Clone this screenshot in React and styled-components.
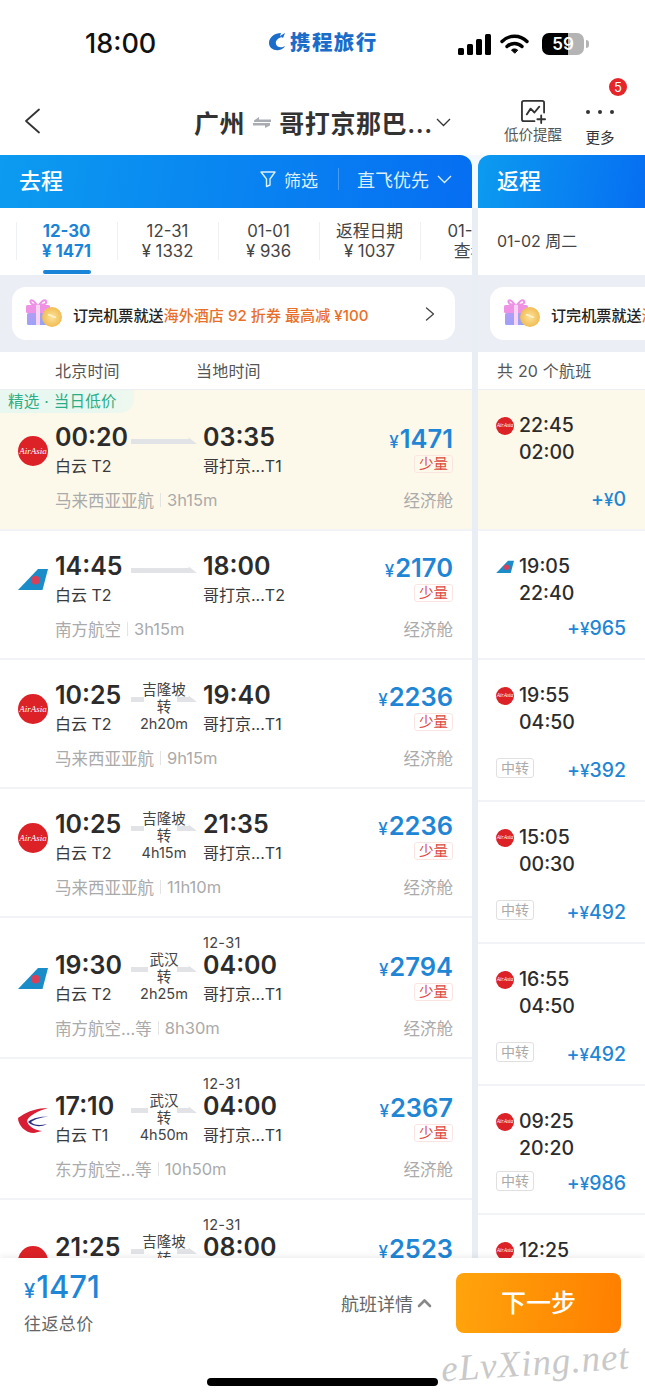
import React from 'react';
import styled, { createGlobalStyle } from 'styled-components';

const Global = createGlobalStyle`
  html, body { margin: 0; padding: 0; background: #fff; }
  body { font-family: Inter, "Noto Sans CJK SC", sans-serif; color: #333; }
  * { box-sizing: border-box; }
`;

const Page = styled.div`
  position: relative; width: 645px; height: 1398px; overflow: hidden;
  display: flex; flex-direction: column; background: #fff;
`;

/* Status bar */
const StatusBar = styled.div`
  height: 76px; flex: none; padding: 26px 55px 0 85px;
  display: flex; align-items: flex-start;
`;
const Clock = styled.div`font-size: 27px; line-height: 36px; font-weight: 500; color: #111; width: 183px;`;
const Brand = styled.div`
  display: flex; align-items: center; gap: 4px; width: 190px; height: 30px;
  color: #1c6dc9; font-size: 20.5px; font-weight: 800; letter-spacing: 1.4px;
`;
const StatusIcons = styled.div`display: flex; align-items: center; gap: 9px; height: 36px;`;
const Battery = styled.div`
  width: 42px; height: 22px; border-radius: 7px;
  background: linear-gradient(90deg, #000 62%, #b4b4b4 62%);
  color: #fff; font-size: 17px; font-weight: 600; line-height: 22px; text-align: center; position: relative;
  margin-left: 4px;
  &::after { content: ''; position: absolute; right: -5px; top: 7px; width: 3px; height: 8px; border-radius: 0 3px 3px 0; background: #b4b4b4; }
`;

/* Nav */
const Nav = styled.div`
  height: 79px; flex: none; position: relative; display: flex; align-items: flex-start;
`;
const Back = styled.div`width: 194px; padding: 32px 0 0 24px; flex: none;`;
const Title = styled.div`
  display: flex; align-items: center; height: 46px; margin-top: 23px;
  font-size: 25px; font-weight: 600; color: #333; letter-spacing: .6px; width: 309px; flex: none;
`;
const NavAction = styled.div`
  flex: none; width: ${p => p.$w}px; display: flex; flex-direction: column; align-items: center;
  padding-top: ${p => p.$top}px; color: ${p => p.$c}; font-size: 14.5px; line-height: 20px; white-space: nowrap;
`;
const Badge = styled.div`
  position: absolute; left: 609px; top: 2px; width: 18px; height: 18px; border-radius: 50%;
  background: #e5252a; color: #fff; font-size: 13px; line-height: 18px; text-align: center;
`;

/* Panels */
const Panels = styled.div`
  flex: 1; min-height: 0; display: flex; gap: 6px; overflow: hidden;
  background: linear-gradient(#f4f9ff 53px, #e9eef5 53px);
`;
const Panel = styled.div`
  display: flex; flex-direction: column; min-width: 0; overflow: hidden;
  width: ${p => p.$w}px; flex: none;
`;
const PanelHead = styled.div`
  height: 53px; flex: none; display: flex; align-items: center; color: #fff;
  padding: 0 20px 5px 19px;
  border-radius: ${p => (p.$side === 'left' ? '0 12px 0 0' : '12px 0 0 0')};
  background: linear-gradient(100deg, #0c9bf0, #066ef2);
`;
const PanelName = styled.div`font-size: 22px; font-weight: 500; flex: 1;`;
const HeadAction = styled.div`
  display: flex; align-items: center; gap: 8px; font-size: ${p => p.$fs}px; color: #dcefff;
`;
const HeadRule = styled.div`width: 1px; height: 22px; background: rgba(255,255,255,.25); margin: 0 18px 0 20px;`;

const Tabs = styled.div`
  height: 67px; flex: none; background: #fff; display: flex; padding-left: 16px; overflow: hidden;
`;
const Tab = styled.div`
  position: relative; flex: none; width: 101px; height: 67px; padding-top: 13px; text-align: center;
  font-size: 16.8px; line-height: 20px; color: ${p => (p.$active ? '#1a84d8' : '#444')};
  font-weight: ${p => (p.$active ? 700 : 400)};
  white-space: nowrap;
  &::before { content: ''; position: absolute; left: 0; top: 14px; height: 38px; width: 1px; background: #eef0f3; }
`;
const TabBar = styled.div`
  position: absolute; left: 27px; bottom: 1px; width: 48px; height: 4px; border-radius: 2px; background: #1a84d8;
`;
const ReturnDate = styled.div`
  height: 67px; flex: none; background: #fff; padding-left: 19px; font-size: 16px; line-height: 66px; color: #444;
`;

const PromoBand = styled.div`
  height: 77px; flex: none; background: #ebeff5; padding: 12px ${p => p.$right}px 12px ${p => p.$left}px;
`;
const PromoCard = styled.div`
  height: 53px; background: #fff; display: flex; align-items: center; padding-left: 13px;
  border-radius: ${p => (p.$open ? '14px 0 0 14px' : '14px')}; overflow: hidden; white-space: nowrap;
`;
const GiftBox = styled.div`flex: none; display: flex;`;
const PromoText = styled.div`
  margin-left: 10px; font-size: 15.1px; font-weight: 500; color: #222; flex: 1 0 auto;
  span { color: #e8702a; }
`;
const PromoArrow = styled.div`padding-right: 20px; display: flex;`;

const ColHead = styled.div`
  height: 38px; flex: none; background: #fff; border-bottom: 1px solid #eceef1;
  display: flex; align-items: center; padding: 0 0 2px ${p => p.$left}px;
  font-size: 16px; color: #555; letter-spacing: .2px; white-space: nowrap;
`;
const ColLabel = styled.div`width: 141px;`;

const List = styled.div`flex: 1; min-height: 0; overflow: hidden; background: #fff;`;

/* Outbound flight row */
const Row = styled.div`
  position: relative; height: ${p => (p.$tall ? 141 : 129)}px;
  padding: ${p => (p.$dated ? 17 : p.$tall ? 33 : 21)}px 19px 0 18px;
  background: ${p => (p.$hl ? '#fdf9ea' : '#fff')};
  border-bottom: 2px solid #f1f3f6;
`;
const PickTag = styled.div`
  position: absolute; left: 0; top: 0; height: 23px; width: 134px; padding-left: 8px;
  font-size: 15.5px; line-height: 23px; color: #2bae85; letter-spacing: .3px; white-space: nowrap;
  background: linear-gradient(90deg, #e9f7f1 70%, #eef8ee);
  border-radius: 0 0 14px 0;
`;
const Main = styled.div`
  display: grid; grid-template-columns: 37px 76px 72px 1fr auto; grid-template-rows: auto 30px 25px;
`;
const DateMark = styled.div`
  grid-column: 4; grid-row: 1; height: 16px; line-height: 16px; font-size: 14.5px; color: #444; letter-spacing: .3px;
`;
const LogoCell = styled.div`grid-column: 1; grid-row: 2 / 4; display: flex; align-items: center;`;
const Time = styled.div`
  grid-column: ${p => p.$col}; grid-row: 2; align-self: start; font-size: 25px; line-height: 28px; font-weight: 600; color: #2c2c2c; white-space: nowrap;
`;
const Terminal = styled.div`
  grid-column: ${p => p.$col}; grid-row: 3; align-self: end; margin-bottom: 1px; font-size: 16px; line-height: 22px; color: #3a3a3a; white-space: nowrap;
`;
const Mid = styled.div`grid-column: 3; grid-row: 2 / 4; position: relative; width: 66px;`;
const LineArt = styled.svg`position: absolute; left: 0; top: 13px;`;
const Transit = styled.div`
  position: relative; text-align: center; font-size: 14.5px; line-height: 17px; color: #444; white-space: nowrap;
`;
const PriceCell = styled.div`
  grid-column: 5; grid-row: 2 / 4; display: flex; flex-direction: column; align-items: flex-end;
`;
const Price = styled.div`
  padding-top: 1px; font-size: 25.5px; line-height: 30px; font-weight: 600; color: #1f86d6; white-space: nowrap;
  small { font-size: 17px; margin-right: 1px; font-weight: 500; }
`;
const Scarce = styled.div`
  width: 39px; height: 18px; margin-top: -2px; border: 1px solid #fbe5e2; border-radius: 3px;
  color: #dd4a40; font-size: 14.5px; line-height: 16px; text-align: center;
`;
const Meta = styled.div`
  margin: 11px 0 0 37px; display: flex; align-items: center; height: 22px; font-size: 16.5px; color: #aaa; white-space: nowrap;
`;
const MetaRule = styled.div`width: 1px; height: 14px; background: #e4e4e4; margin: 0 6px;`;
const Cabin = styled.div`margin-left: auto;`;

/* Return row */
const RRow = styled.div`
  height: ${p => p.$h}px; display: flex; flex-direction: column; padding: 22px 19px 19px 18px;
  background: ${p => (p.$hl ? '#fdf9ea' : '#fff')}; border-bottom: 2px solid #f1f3f6;
`;
const RTimes = styled.div`display: grid; grid-template-columns: 23px 1fr; font-size: 19.5px; line-height: 27px; font-weight: 500; color: #2c2c2c;`;
const RLogo = styled.div`height: 27px; display: flex; align-items: center; justify-content: flex-start;`;
const RFoot = styled.div`margin-top: auto; display: flex; align-items: center; justify-content: space-between; height: 22px;`;
const Stop = styled.div`
  width: 38px; height: 20px; margin-top: -4px; border: 1px solid #e0e0e0; border-radius: 3px; font-size: 14px; line-height: 18px; color: #aaa; text-align: center;
`;
const Delta = styled.div`margin-left: auto; font-size: 19.5px; font-weight: 500; color: #1f86d6; white-space: nowrap; small { font-size: 17px; }`;

const AirCircle = styled.div`
  width: ${p => p.$s}px; height: ${p => p.$s}px; border-radius: 50%; background: #dc2127; color: #fff; flex: none;
  display: flex; align-items: center; justify-content: center; overflow: hidden;
  font-family: "Liberation Serif", serif; font-style: italic; font-weight: 400; font-size: ${p => p.$s * 0.3}px; white-space: nowrap;
`;

/* Bottom */
const Bottom = styled.div`
  position: relative; z-index: 2; height: 140px; flex: none; background: #fff; box-shadow: 0 -2px 6px rgba(0,0,0,.07);
  display: flex; align-items: flex-start; padding: 15px 24px 0 24px;
`;
const TotalBlock = styled.div`width: 317px; flex: none;`;
const Total = styled.div`
  font-size: 31px; line-height: 28px; font-weight: 500; color: #1f86d6;
  small { font-size: 20px; margin-right: 1px; }
`;
const TotalLabel = styled.div`margin-top: 9px; font-size: 17px; line-height: 20px; color: #666; letter-spacing: .4px;`;
const Details = styled.div`
  width: 115px; flex: none; display: flex; align-items: center; gap: 4px; height: 60px; font-size: 18px; color: #666; white-space: nowrap;
`;
const NextBtn = styled.div`
  width: 165px; height: 60px; flex: none; border-radius: 8px; background: linear-gradient(95deg, #ffa40c, #ff7f00);
  color: #fff; font-size: 25px; font-weight: 500; line-height: 60px; text-align: center;
`;
const HomeBar = styled.div`
  position: absolute; left: 207px; top: 120px; width: 231px; height: 8px; border-radius: 4px; background: #000;
`;
const Watermark = styled.div`
  position: absolute; left: 441px; top: 1343px; z-index: 3; transform: rotate(-4deg);
  font-family: "Liberation Serif", serif; font-style: italic; font-weight: 400; font-size: 37px; line-height: 40px;
  letter-spacing: 1px; color: #c9c9c9; white-space: nowrap;
`;

/* Drawings */
const Chev = ({ d, w, h, c = '#333', sw = 1.6, vb }) => (
  <svg width={w} height={h} viewBox={vb} fill="none"><path d={d} stroke={c} strokeWidth={sw} strokeLinecap="round" strokeLinejoin="round" /></svg>
);

const SouthernLogo = ({ w = 30 }) => (
  <svg width={w} height={w * 0.74} viewBox="0 0 30 22">
    <path d="M0 22L20 1H30L24.5 22Z" fill="#1a8dc8" />
    <circle cx="17.5" cy="12" r="4.4" fill="#d8405a" />
  </svg>
);
const EasternLogo = () => (
  <svg width="30" height="26" viewBox="0 0 30 26">
    <path d="M30 1C20 1 10 4 3 9L0 11C0 18 7 26 16 26L24 24C16 23 10 19 9 14C10 9 20 4 30 1Z" fill="#d81e34" />
    <path d="M30 10C22 9 13 12 10 15C14 19 22 21 29 17C22 19 15 18 13 15C17 12 24 10 30 10Z" fill="#2a2f80" />
  </svg>
);
const Logo = ({ kind, s = 30 }) => {
  if (kind === 'air') return <AirCircle $s={s}>AirAsia</AirCircle>;
  if (kind === 'cs') return <SouthernLogo w={s} />;
  return <EasternLogo />;
};

const Gift = () => (
  <GiftBox>
    <svg width="38" height="33" viewBox="0 0 38 33">
      <defs>
        <linearGradient id="gb" x1="0" y1="0" x2="1" y2="1"><stop offset="0" stopColor="#b59cf7" /><stop offset="1" stopColor="#8fa4f6" /></linearGradient>
        <radialGradient id="gc"><stop offset="0" stopColor="#fbe39a" /><stop offset="1" stopColor="#f1bc55" /></radialGradient>
      </defs>
      <path d="M12 8C7 1 4 3 6 6C7 8 10 8 12 8ZM14 8C19 1 22 3 21 6C20 8 17 8 14 8Z" fill="none" stroke="#ee92e6" strokeWidth="2" />
      <rect x="1" y="8" width="24" height="8" rx="1.5" fill="#ee92e6" />
      <rect x="2" y="16" width="22" height="12" rx="1.5" fill="url(#gb)" />
      <rect x="11" y="8" width="4" height="20" fill="#f9d3f2" />
      <circle cx="27" cy="20" r="10" fill="url(#gc)" />
      <path d="M23 18C26 17 28 21 31 20" stroke="#fff2c8" strokeWidth="1.6" fill="none" />
    </svg>
  </GiftBox>
);

const Arrow = ({ city }) => {
  const left = city && city.length === 3 ? 13 : 17;
  return (
    <LineArt width="66" height="10" viewBox="0 0 66 10">
      {city ? (
        <>
          <rect x="0" y="3" width={left} height="5" fill="#e2e3e6" />
          <path d="M46 3H58L57 1L66 8H46Z" fill="#e2e3e6" />
        </>
      ) : (
        <path d="M0 3H58L57 1L66 8H0Z" fill="#e2e3e6" />
      )}
    </LineArt>
  );
};

const outbound = [
  { logo: 'air', dep: '00:20', arr: '03:35', from: '白云 T2', to: '哥打京...T1', price: '1471', airline: '马来西亚亚航', dur: '3h15m', tall: true, hl: true },
  { logo: 'cs', dep: '14:45', arr: '18:00', from: '白云 T2', to: '哥打京...T2', price: '2170', airline: '南方航空', dur: '3h15m' },
  { logo: 'air', dep: '10:25', arr: '19:40', from: '白云 T2', to: '哥打京...T1', price: '2236', airline: '马来西亚亚航', dur: '9h15m', city: '吉隆坡', wait: '2h20m' },
  { logo: 'air', dep: '10:25', arr: '21:35', from: '白云 T2', to: '哥打京...T1', price: '2236', airline: '马来西亚亚航', dur: '11h10m', city: '吉隆坡', wait: '4h15m' },
  { logo: 'cs', dep: '19:30', arr: '04:00', from: '白云 T2', to: '哥打京...T1', price: '2794', airline: '南方航空...等', dur: '8h30m', city: '武汉', wait: '2h25m', date: '12-31', tall: true },
  { logo: 'ce', dep: '17:10', arr: '04:00', from: '白云 T1', to: '哥打京...T1', price: '2367', airline: '东方航空...等', dur: '10h50m', city: '武汉', wait: '4h50m', date: '12-31', tall: true },
  { logo: 'air', dep: '21:25', arr: '08:00', from: '白云 T2', to: '哥打京...T1', price: '2523', airline: '马来西亚亚航', dur: '10h35m', city: '吉隆坡', wait: '3h20m', date: '12-31', tall: true },
];

const inbound = [
  { logo: 'air', a: '22:45', b: '02:00', d: '0', h: 141, hl: true },
  { logo: 'cs', a: '19:05', b: '22:40', d: '965', h: 129 },
  { logo: 'air', a: '19:55', b: '04:50', d: '392', h: 142, stop: true },
  { logo: 'air', a: '15:05', b: '00:30', d: '492', h: 142, stop: true },
  { logo: 'air', a: '16:55', b: '04:50', d: '492', h: 142, stop: true },
  { logo: 'air', a: '09:25', b: '20:20', d: '986', h: 129, stop: true },
  { logo: 'air', a: '12:25', b: '23:40', d: '986', h: 142, stop: true },
];

const tabs = [
  ['12-30', '¥ 1471', true], ['12-31', '¥ 1332'], ['01-01', '¥ 936'], ['返程日期', '¥ 1037'], ['01-03', '查看'],
];

export default function App() {
  return (
    <Page>
      <Global />
      <StatusBar>
        <Clock>18:00</Clock>
        <Brand>
          <svg width="18" height="19" viewBox="0 0 18 19" style={{ flex: 'none' }}>
            <path d="M13 1C7 1 1 5 1 11C1 16 6 19 11 18C14 17.5 16 16 17 14C14 16 9 16 8 12C7 9 10 6 14 5L12 4Z" fill="#1c6dc9" />
            <path d="M12 4L17 1L15 6Z" fill="#1c6dc9" />
          </svg>
          携程旅行
        </Brand>
        <StatusIcons>
          <svg width="33" height="21" viewBox="0 0 33 21" fill="#000">
            <rect x="0" y="14" width="6" height="7" rx="1.5" />
            <rect x="9" y="10" width="6" height="11" rx="1.5" />
            <rect x="18" y="5" width="6" height="16" rx="1.5" />
            <rect x="27" y="0" width="6" height="21" rx="1.5" />
          </svg>
          <svg width="29" height="21" viewBox="0 0 29 21" fill="none" stroke="#000" strokeWidth="3.4" strokeLinecap="round">
            <path d="M2 7.5C9 0.5 20 0.5 27 7.5" />
            <path d="M7 12.5C11 8.5 18 8.5 22 12.5" />
            <path d="M14.5 19L11.5 16C13 14.5 16 14.5 17.5 16Z" fill="#000" strokeWidth="1" />
          </svg>
          <Battery>59</Battery>
        </StatusIcons>
      </StatusBar>

      <Nav>
        <Back>
          <Chev w={17} h={26} vb="0 0 17 26" d="M15 1.5L2 13L15 24.5" c="#333" sw={1.8} />
        </Back>
        <Title>
          广州
          <svg width="34" height="12" viewBox="0 0 34 12" style={{ flex: 'none' }}>
            <path d="M9 4.5L14 1V3.5H26V6H9ZM8 7H25V9.5L20 12V9.5H8Z" fill="#a9adb3" />
          </svg>
          哥打京那巴...
          <svg width="15" height="9" viewBox="0 0 15 9" style={{ flex: 'none', marginLeft: 3 }}>
            <path d="M1 1L7.5 7.5L14 1" fill="none" stroke="#333" strokeWidth="1.3" />
          </svg>
        </Title>
        <NavAction $w={60} $top={23} $c="#555">
          <svg width="27" height="26" viewBox="0 0 28 27" fill="none" stroke="#333" strokeWidth="1.9" strokeLinecap="round" strokeLinejoin="round">
            <path d="M15 23H4C3 23 2 22 2 21V4C2 3 3 2 4 2H23C24 2 25 3 25 4V14" />
            <path d="M7 16L11 10L15 14L20 8" />
            <path d="M22 17V25M18 21H26" />
          </svg>
          <span>低价提醒</span>
        </NavAction>
        <NavAction $w={74} $top={26} $c="#333">
          <svg width="30" height="26" viewBox="0 0 30 26" fill="#333">
            <circle cx="3" cy="10" r="2" /><circle cx="15" cy="10" r="2" /><circle cx="27" cy="10" r="2" />
          </svg>
          <span>更多</span>
        </NavAction>
        <Badge>5</Badge>
      </Nav>

      <Panels>
        <Panel $w={472}>
          <PanelHead $side="left">
            <PanelName>去程</PanelName>
            <HeadAction $fs={17}>
              <svg width="16" height="18" viewBox="0 0 16 18" fill="none" stroke="#dcefff" strokeWidth="1.4" strokeLinejoin="round">
                <path d="M1 2H15L10 9V15L6.5 16.5V9Z" />
              </svg>
              筛选
            </HeadAction>
            <HeadRule />
            <HeadAction $fs={18}>
              直飞优先
              <svg width="15" height="9" viewBox="0 0 15 9" fill="none" stroke="#dcefff" strokeWidth="1.4"><path d="M1 1L7.5 7.5L14 1" /></svg>
            </HeadAction>
          </PanelHead>
          <Tabs>
            {tabs.map(([a, b, active]) => (
              <Tab key={a} $active={active}>
                <div>{a}</div>
                <div>{b}</div>
                {active && <TabBar />}
              </Tab>
            ))}
          </Tabs>
          <PromoBand $left={12} $right={17}>
            <PromoCard>
              <Gift />
              <PromoText>订完机票就送<span>海外酒店 92 折券 最高减 ¥100</span></PromoText>
              <PromoArrow>
                <Chev w={10} h={14} vb="0 0 10 14" d="M1.5 1L8.5 7L1.5 13" c="#444" sw={1.3} />
              </PromoArrow>
            </PromoCard>
          </PromoBand>
          <ColHead $left={55}>
            <ColLabel>北京时间</ColLabel>
            <ColLabel>当地时间</ColLabel>
          </ColHead>
          <List>
            {outbound.map((f, i) => (
              <Row key={i} $tall={f.tall} $hl={f.hl} $dated={!!f.date}>
                {f.hl && <PickTag>精选 · 当日低价</PickTag>}
                <Main>
                  {f.date && <DateMark>{f.date}</DateMark>}
                  <LogoCell><Logo kind={f.logo} /></LogoCell>
                  <Time $col={2}>{f.dep}</Time>
                  <Terminal $col={2}>{f.from}</Terminal>
                  <Mid>
                    <Arrow city={f.city} />
                    {f.city && (
                      <Transit>
                        <div>{f.city}</div>
                        <div>转</div>
                        <div>{f.wait}</div>
                      </Transit>
                    )}
                  </Mid>
                  <Time $col={4}>{f.arr}</Time>
                  <Terminal $col={4}>{f.to}</Terminal>
                  <PriceCell>
                    <Price><small>¥</small>{f.price}</Price>
                    <Scarce>少量</Scarce>
                  </PriceCell>
                </Main>
                <Meta>
                  {f.airline}
                  <MetaRule />
                  {f.dur}
                  <Cabin>经济舱</Cabin>
                </Meta>
              </Row>
            ))}
          </List>
        </Panel>

        <Panel $w={167}>
          <PanelHead $side="right">
            <PanelName>返程</PanelName>
          </PanelHead>
          <ReturnDate>01-02 周二</ReturnDate>
          <PromoBand $left={12} $right={0}>
            <PromoCard $open>
              <Gift />
              <PromoText>订完机票就送<span>海外酒店 92 折券</span></PromoText>
            </PromoCard>
          </PromoBand>
          <ColHead $left={19}>共 20 个航班</ColHead>
          <List>
            {inbound.map((f, i) => (
              <RRow key={i} $h={f.h} $hl={f.hl}>
                <RTimes>
                  <RLogo><Logo kind={f.logo} s={18} /></RLogo>
                  <div>{f.a}</div>
                  <div />
                  <div>{f.b}</div>
                </RTimes>
                <RFoot>
                  {f.stop && <Stop>中转</Stop>}
                  <Delta>+<small>¥</small>{f.d}</Delta>
                </RFoot>
              </RRow>
            ))}
          </List>
        </Panel>
      </Panels>

      <Bottom>
        <TotalBlock>
          <Total><small>¥</small>1471</Total>
          <TotalLabel>往返总价</TotalLabel>
        </TotalBlock>
        <Details>
          航班详情
          <Chev w={15} h={10} vb="0 0 15 10" d="M2 8L7.5 2.5L13 8" c="#888" sw={2.6} />
        </Details>
        <NextBtn>下一步</NextBtn>
        <HomeBar />
      </Bottom>
      <Watermark>eLvXing.net</Watermark>
    </Page>
  );
}
